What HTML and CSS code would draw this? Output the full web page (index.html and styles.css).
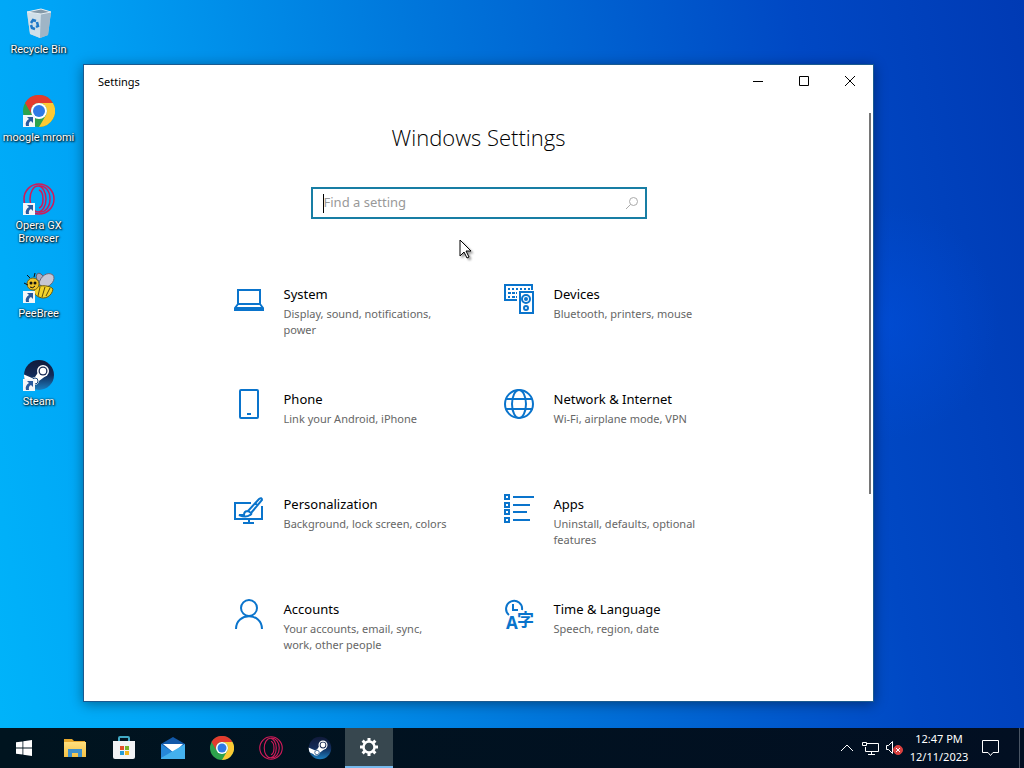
FILE: index.html
```html
<!DOCTYPE html>
<html lang="en">
<head>
    <meta charset="UTF-8">
    <meta name="viewport" content="width=device-width, initial-scale=1.0">
    <title>Settings</title>
    <link rel="stylesheet" href="styles.css">
</head>
<body>
    <!-- shared icons -->
    <svg class="defs" aria-hidden="true">
        <defs>
            <linearGradient id="steam-bg" x1="0" y1="0" x2="0" y2="1">
                <stop offset="0" stop-color="#101a3a"/>
                <stop offset="0.5" stop-color="#122a58"/>
                <stop offset="1" stop-color="#1c7fc0"/>
            </linearGradient>
            <linearGradient id="folder-bg" x1="0" y1="0" x2="0" y2="1">
                <stop offset="0" stop-color="#ffdf7e"/>
                <stop offset="1" stop-color="#f5c244"/>
            </linearGradient>
            <clipPath id="steam-clip"><circle cx="16" cy="16" r="15"/></clipPath>
        </defs>
        <symbol id="chrome" viewBox="0 0 32 32">
            <circle cx="16" cy="16" r="16" fill="#2da24c"/>
            <path d="M2.1 8A16 16 0 0 1 29.9 8H16a8 8 0 0 0-7 12z" fill="#e33b2e"/>
            <path d="M29.9 8A16 16 0 0 1 16 32l7-12a8 8 0 0 0-7-12z" fill="#fcc934"/>
            <circle cx="16" cy="16" r="8" fill="#fff"/>
            <circle cx="16" cy="16" r="6" fill="#2f7ae5"/>
        </symbol>
        <symbol id="opera" viewBox="0 0 32 32">
            <g fill="none" stroke="#cf1b59" stroke-width="1.5">
                <circle cx="16" cy="16" r="15"/>
                <ellipse cx="15" cy="16" rx="8" ry="13"/>
                <path d="M16 3c6-1 11 5 11 13s-5 14-11 13"/>
                <path d="M16 7c3 1 4 5 4 9s-1 8-4 9"/>
            </g>
        </symbol>
        <symbol id="steam" viewBox="0 0 32 32">
            <circle cx="16" cy="16" r="15" fill="url(#steam-bg)"/>
            <g clip-path="url(#steam-clip)">
                <path d="M0 15l9 4 3-1 4-6 8 4-8 6a5 5 0 0 1-9 2l-7-3z" fill="#fff"/>
            </g>
            <circle cx="20" cy="12" r="6" fill="#fff"/>
            <circle cx="20" cy="12" r="4.5" fill="#1b2c55"/>
            <circle cx="20" cy="12" r="3.2" fill="#fff"/>
            <circle cx="12" cy="22" r="3" fill="none" stroke="#1b4a80"/>
        </symbol>
        <symbol id="shortcut" viewBox="0 0 12 12">
            <path d="M0 0h12v12H0z" fill="#f4f6f8"/>
            <path d="M4 2h6v6L8 6C6 7 5.500 8.500 6 11H3C2 8 3.500 5.500 6 4z" fill="#2a5a9d"/>
        </symbol>
    </svg>

    <main class="desktop">
        <nav class="shortcuts" aria-label="Desktop">
            <a class="shortcut" href="#">
                <svg class="picture" viewBox="0 0 32 32">
                    <path d="M4 5l14-3 10 3-3 23-8 3-10-4z" fill="#b9cddb"/>
                    <path d="M4 5l14 2-1 24-10-4z" fill="#cfdfe9"/>
                    <path d="M18 7l10-2-3 23-8 3z" fill="#9fb5c6"/>
                    <path d="M4 5l14-3 10 3-10 2z" fill="#8499a8" stroke="#e4edf3"/>
                    <g fill="none" stroke="#1f78c8" stroke-width="2.500">
                        <path d="M8 16l2-3 3 1M14 15l1 4-2 1M12 22l-3-1-1-3"/>
                    </g>
                </svg>
                <span>Recycle Bin</span>
            </a>
            <a class="shortcut" href="#">
                <svg class="picture" viewBox="0 0 32 32"><use href="#chrome"/><use href="#shortcut" y="20" width="12" height="12"/></svg>
                <span>moogle mromi</span>
            </a>
            <a class="shortcut" href="#">
                <svg class="picture" viewBox="0 0 32 32"><use href="#opera"/><use href="#shortcut" y="20" width="12" height="12"/></svg>
                <span>Opera GX Browser</span>
            </a>
            <a class="shortcut" href="#">
                <svg class="picture" viewBox="0 0 32 32">
                    <path d="M14 9C12 3 15 1 18 3c3 2 4 6 4 10z" fill="#a9a9bd" stroke="#5c5c70"/>
                    <path d="M16 13c1-8 9-13 14-9 3 4-1 11-9 13z" fill="#c6c6d4" stroke="#66667a"/>
                    <path d="M12 17c6-4 16-2 18 1-1 7-8 11-14 8-4-1-6-6-4-9z" fill="#f3d32c" stroke="#6e5a08"/>
                    <path d="M17 16l-2 9M22 16l-3 10M27 17l-4 8" stroke="#5a4a0c"/>
                    <circle cx="10" cy="13" r="6" fill="#edc22a" stroke="#7c6410"/>
                    <circle cx="8" cy="12" r="1.500" fill="#111"/>
                    <circle cx="12" cy="12" r="1.500" fill="#111"/>
                    <path d="M7 7L4 4M11 6l1-4M1 12l4 2M7 16q3 2 5-1" fill="none" stroke="#111"/>
                    <use href="#shortcut" y="20" width="12" height="12"/>
                </svg>
                <span>PeeBree</span>
            </a>
            <a class="shortcut" href="#">
                <svg class="picture" viewBox="0 0 32 32"><use href="#steam"/><use href="#shortcut" y="20" width="12" height="12"/></svg>
                <span>Steam</span>
            </a>
        </nav>

        <section class="window" aria-label="Settings window">
            <header class="titlebar">
                <span class="title">Settings</span>
                <button type="button" aria-label="Minimize"><svg width="10" height="10"><path d="M0 5.500h10"/></svg></button>
                <button type="button" aria-label="Maximize"><svg width="10" height="10"><path d="M.5 .5h9v9h-9z"/></svg></button>
                <button type="button" aria-label="Close"><svg width="10" height="10"><path d="M0 0l10 10M10 0L0 10"/></svg></button>
            </header>
            <div class="content">
                <h1>Windows Settings</h1>
                <form class="search">
                    <span class="caret"></span>
                    <input type="text" placeholder="Find a setting" aria-label="Find a setting">
                    <button type="button" aria-label="Search">
                        <svg width="14" height="14" viewBox="0 0 14 14"><circle cx="8.500" cy="5.500" r="4"/><path d="M5.500 8.500L1 13"/></svg>
                    </button>
                </form>
                <div class="categories">
                    <a class="category" href="#">
                        <svg viewBox="0 0 30 30"><path d="M4 6h22v14H4zM4 20l-3 4v2h28v-2l-3-4M1 24h28"/></svg>
                        <div><h2>System</h2><p>Display, sound, notifications, power</p></div>
                    </a>
                    <a class="category" href="#">
                        <svg viewBox="0 0 30 30">
                            <path d="M28 6V1H1v15h12M16 8h13v21H16z"/>
                            <path d="M4 5h22" stroke-dasharray="2 2"/>
                            <path d="M4 9h9M4 13h2M8 13h5" stroke-dasharray="3 1"/>
                            <circle cx="22" cy="15" r="4"/><circle cx="22" cy="15" r="1" class="solid"/><circle cx="22" cy="24" r="2"/>
                        </svg>
                        <div><h2>Devices</h2><p>Bluetooth, printers, mouse</p></div>
                    </a>
                    <a class="category" href="#">
                        <svg viewBox="0 0 30 30"><rect x="6" y="1" width="18" height="28" rx="1"/><path d="M13 25h4"/></svg>
                        <div><h2>Phone</h2><p>Link your Android, iPhone</p></div>
                    </a>
                    <a class="category" href="#">
                        <svg viewBox="0 0 30 30"><circle cx="15" cy="15" r="14"/><ellipse cx="15" cy="15" rx="7" ry="14"/><path d="M2 10h26M2 20h26"/></svg>
                        <div><h2>Network &amp; Internet</h2><p>Wi-Fi, airplane mode, VPN</p></div>
                    </a>
                    <a class="category" href="#">
                        <svg viewBox="0 0 30 30">
                            <path d="M17 9H1v16h27V12M15 25v4M9 29h11"/>
                            <path d="M14 17L25 5q3-2 3 1L17 19M14 17q-4 0-4 4H5q7 3 11 0 2-1 1-2zM21 9l3 3"/>
                        </svg>
                        <div><h2>Personalization</h2><p>Background, lock screen, colors</p></div>
                    </a>
                    <a class="category" href="#">
                        <svg viewBox="0 0 30 30">
                            <path d="M1 1h4v4H1zM1 9h4v4H1zM1 16h4v4H1zM1 24h4v4H1z"/>
                            <path d="M9 3h21M9 11h17M9 18h14M9 26h17"/>
                        </svg>
                        <div><h2>Apps</h2><p>Uninstall, defaults, optional features</p></div>
                    </a>
                    <a class="category" href="#">
                        <svg viewBox="0 0 30 30"><circle cx="15" cy="9" r="8"/><path d="M2 30c0-17 26-17 26 0"/></svg>
                        <div><h2>Accounts</h2><p>Your accounts, email, sync, work, other people</p></div>
                    </a>
                    <a class="category" href="#">
                        <svg viewBox="0 0 30 30">
                            <path d="M5 16A8 8 0 1 1 18 11M9 5v6h5"/>
                            <text class="letter" x="2" y="30">A</text>
                            <text class="kanji" x="13" y="27">字</text>
                        </svg>
                        <div><h2>Time &amp; Language</h2><p>Speech, region, date</p></div>
                    </a>
                </div>
                <div class="scrollbar"></div>
            </div>
        </section>

        <svg class="cursor" width="14" height="22" viewBox="0 0 14 22">
            <path d="M1 1v16l4-4 3 6 2-1-3-6h5z"/>
        </svg>
    </main>

    <footer class="taskbar">
        <button type="button" class="start" aria-label="Start">
            <svg width="16" height="16" viewBox="0 0 16 16"><path d="M0 2.300L6.500 1.400v6.200H0zM7.300 1.300L16 0v7.600H7.300zM0 8.400h6.500v6.200L0 13.700zM7.300 8.400H16V16l-8.700-1.300z" fill="#fff"/></svg>
        </button>
        <button type="button" aria-label="File Explorer">
            <svg width="24" height="24" viewBox="0 0 24 24">
                <path d="M1 3h8l2 2h11v16H1z" fill="#e8a92d"/>
                <path d="M1 6h22v15H1z" fill="url(#folder-bg)"/>
                <path d="M5 13h14v8h-4v-4H9v4H5z" fill="#3f90ca"/>
            </svg>
        </button>
        <button type="button" aria-label="Microsoft Store">
            <svg width="24" height="24" viewBox="0 0 24 24">
                <path d="M7 6V2q0-1 1-1h8q1 0 1 1v4" fill="none" stroke="#40a9c4" stroke-width="2"/>
                <path d="M1 5h22v16q0 2-2 2H3q-2 0-2-2z" fill="#f1f3f5"/>
                <path d="M8 10h4v4H8z" fill="#e2502b"/><path d="M13 10h4v4h-4z" fill="#79b42b"/>
                <path d="M8 15h4v4H8z" fill="#259bd5"/><path d="M13 15h4v4h-4z" fill="#f3b51d"/>
            </svg>
        </button>
        <button type="button" aria-label="Mail">
            <svg width="24" height="24" viewBox="0 0 24 24">
                <path d="M0 8l12-7 12 7v8H0z" fill="#1259a9"/>
                <path d="M2 8h20l-9 9z" fill="#fff"/>
                <path d="M0 8l13 9-13 6z" fill="#2687d8"/>
                <path d="M24 8L0 22v1h24z" fill="#44b1ee"/>
            </svg>
        </button>
        <button type="button" aria-label="Google Chrome"><svg width="24" height="24"><use href="#chrome"/></svg></button>
        <button type="button" aria-label="Opera GX"><svg width="24" height="24"><use href="#opera"/></svg></button>
        <button type="button" aria-label="Steam"><svg width="24" height="24"><use href="#steam"/></svg></button>
        <button type="button" class="active" aria-label="Settings">
            <svg width="20" height="20" viewBox="0 0 20 20">
                <circle cx="10" cy="10" r="5.500" fill="none" stroke="#fff" stroke-width="2.500"/>
                <g stroke="#fff" stroke-width="3">
                    <path d="M10 1v3M10 16v3M1 10h3M16 10h3M3.600 3.600l2.100 2.100M14.300 14.300l2.100 2.100M3.600 16.400l2.100-2.100M14.300 5.700l2.100-2.100"/>
                </g>
            </svg>
        </button>

        <div class="tray">
            <button type="button" aria-label="Show hidden icons"><svg width="12" height="8"><path d="M0 7l6-6 6 6"/></svg></button>
            <button type="button" aria-label="Network">
                <svg width="18" height="14"><path d="M5 2.500h11.500v8H3.500V6M9.500 10.500v3M6 13.500h7M.5 1.500h4v3h-4z"/></svg>
            </button>
            <button type="button" aria-label="Volume muted">
                <svg width="18" height="16">
                    <path d="M.5 5.500h2l4-4v12l-4-4h-2z"/>
                    <circle cx="12" cy="10" r="4.500" class="mute"/>
                    <path d="M10 8l4 4M14 8l-4 4"/>
                </svg>
            </button>
            <button type="button" class="clock"><span>12:47 PM</span><span>12/11/2023</span></button>
            <button type="button" class="notifications" aria-label="Notifications">
                <svg width="17" height="16"><path d="M.5 .5h16v12H11l-2.500 3-2.500-3H.5z"/></svg>
            </button>
        </div>
    </footer>
</body>
</html>
```
FILE: styles.css
```css
* {
    box-sizing: border-box;
}

body {
    display: flex;
    flex-direction: column;
    height: 100vh;
    margin: 0;
    overflow: hidden;
    font-family: "Noto Sans", "Open Sans", "Noto Sans CJK JP", sans-serif;
    font-size: 11px;
    color: #000;
    background:
        radial-gradient(circle at 86% 42%, rgba(0, 80, 225, 0.5), transparent 12%),
        linear-gradient(80deg, #00b4fa 0%, #00a4f6 16%, #0078dc 46%, #0048c4 80%, #003ab4 100%);
}

h1, h2, p {
    margin: 0;
    font-weight: 400;
}

a {
    color: inherit;
    text-decoration: none;
}

button {
    display: flex;
    align-items: center;
    justify-content: center;
    padding: 0;
    border: 0;
    background: none;
    font: inherit;
    color: inherit;
}

.defs {
    position: absolute;
    width: 0;
    height: 0;
}

.desktop {
    position: relative;
    flex: 1;
    min-height: 0;
}

/* desktop icons */
.shortcuts {
    display: grid;
    grid-auto-rows: 88px;
    width: 77px;
    padding-top: 7px;
}

.shortcut {
    display: flex;
    flex-direction: column;
    align-items: center;
    gap: 4px;
    color: #fff;
    font-family: Roboto, sans-serif;
    line-height: 13px;
    text-align: center;
    text-shadow: 1px 1px 2px #000, 0 0 2px #000;
}

.picture {
    width: 32px;
    height: 32px;
}

/* settings window */
.window {
    position: absolute;
    inset: 64px 150px 26px 83px;
    display: flex;
    flex-direction: column;
    border: 1px solid #1a5a90;
    background: #fff;
    box-shadow: 0 2px 12px rgba(0, 0, 0, 0.4);
}

.titlebar {
    display: flex;
    height: 32px;
}

.title {
    flex: 1;
    padding-left: 14px;
    line-height: 34px;
}

.titlebar button {
    width: 46px;
}

.titlebar svg {
    fill: none;
    stroke: #000;
}

.content {
    position: relative;
    flex: 1;
    min-height: 0;
    overflow: hidden;
    padding-top: 24px;
}

h1 {
    font-family: "Open Sans", sans-serif;
    font-size: 22px;
    font-weight: 300;
    line-height: 32px;
    text-align: center;
}

.search {
    display: flex;
    align-items: center;
    width: 336px;
    height: 32px;
    margin: 34px auto 0;
    border: 2px solid #187ea4;
}

.caret {
    width: 1px;
    height: 19px;
    margin-left: 10px;
    background: #000;
}

.search input {
    flex: 1;
    min-width: 0;
    padding: 0 0 2px;
    border: 0;
    outline: 0;
    background: none;
    font: inherit;
    font-size: 13px;
}

.search input::placeholder {
    color: #999;
}

.search button {
    width: 26px;
}

.search svg {
    fill: none;
    stroke: #aaa;
}

.categories {
    display: grid;
    grid-template-columns: repeat(2, 270px);
    grid-auto-rows: 105px;
    justify-content: center;
    padding-top: 65px;
}

.category {
    display: flex;
    gap: 20px;
    padding: 0 30px 0 25px;
}

.category > svg {
    flex: none;
    width: 30px;
    height: 30px;
    overflow: visible;
    fill: none;
    stroke: #0a74cc;
    stroke-width: 2;
}

.category .solid,
.category text {
    fill: #0a74cc;
}

.category text {
    stroke: none;
    font-weight: 700;
}

.letter {
    font-size: 17px;
}

.kanji {
    font-family: "Noto Sans CJK JP", sans-serif;
    font-size: 17px;
}

h2 {
    font-size: 13px;
    line-height: 20px;
}

.category p {
    padding-top: 2px;
    line-height: 16px;
    color: #666;
}

.scrollbar {
    position: absolute;
    top: 16px;
    right: 2px;
    width: 2px;
    height: 63%;
    background: #767676;
}

.cursor {
    position: absolute;
    left: 459px;
    top: 239px;
    fill: #fff;
    stroke: #000;
    filter: drop-shadow(2px 2px 1px rgba(0, 0, 0, 0.4));
}

/* taskbar */
.taskbar {
    display: flex;
    gap: 1px;
    height: 40px;
    background: linear-gradient(90deg, #00141f, #020f22);
    color: #fff;
}

.taskbar > button {
    width: 48px;
}

.taskbar .start {
    margin-right: 2px;
}

.taskbar .active {
    background: #37474f;
    border-bottom: 2px solid #76b9ed;
}

.tray {
    display: flex;
    margin-left: auto;
    padding-right: 10px;
    border-right: 1px solid #4a5564;
    margin-right: 4px;
}

.tray button {
    width: 24px;
}

.tray svg {
    fill: none;
    stroke: #fff;
}

.tray .mute {
    fill: #d9403f;
    stroke: #d9403f;
}

.tray .clock {
    flex-direction: column;
    width: 64px;
    line-height: 18px;
}

.tray .notifications {
    width: 38px;
}
```
